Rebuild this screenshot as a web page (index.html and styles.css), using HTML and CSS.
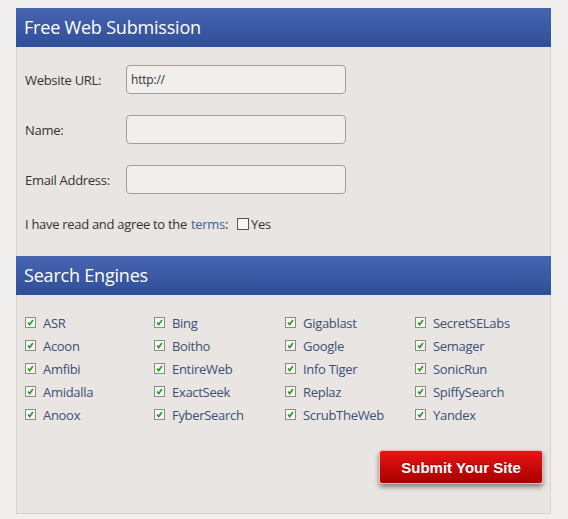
FILE: index.html
```html
<!DOCTYPE html>
<html>
<head>
<meta charset="utf-8">
<link rel="stylesheet" href="styles.css">
</head>
<body>
<div class="panel">
  <div class="head">Free Web Submission</div>
  <div class="form">
    <div class="row"><label class="lbl">Website URL:</label><div class="input">http://</div></div>
    <div class="row"><label class="lbl">Name:</label><div class="input"></div></div>
    <div class="row"><label class="lbl">Email Address:</label><div class="input"></div></div>
    <div class="terms">I have read and agree to the <span class="link">terms</span>: <span class="box"></span>Yes</div>
  </div>
  <div class="head">Search Engines</div>
  <div class="engines">
    <div class="eng"><span class="chk"><svg viewBox="0 0 11 11"><path d="M2.5 5.5 L4.5 8 L8.5 2.5" fill="none" stroke="#2f9a22" stroke-width="2"/></svg></span>ASR</div>
    <div class="eng"><span class="chk"><svg viewBox="0 0 11 11"><path d="M2.5 5.5 L4.5 8 L8.5 2.5" fill="none" stroke="#2f9a22" stroke-width="2"/></svg></span>Bing</div>
    <div class="eng"><span class="chk"><svg viewBox="0 0 11 11"><path d="M2.5 5.5 L4.5 8 L8.5 2.5" fill="none" stroke="#2f9a22" stroke-width="2"/></svg></span>Gigablast</div>
    <div class="eng"><span class="chk"><svg viewBox="0 0 11 11"><path d="M2.5 5.5 L4.5 8 L8.5 2.5" fill="none" stroke="#2f9a22" stroke-width="2"/></svg></span>SecretSELabs</div>
    <div class="eng"><span class="chk"><svg viewBox="0 0 11 11"><path d="M2.5 5.5 L4.5 8 L8.5 2.5" fill="none" stroke="#2f9a22" stroke-width="2"/></svg></span>Acoon</div>
    <div class="eng"><span class="chk"><svg viewBox="0 0 11 11"><path d="M2.5 5.5 L4.5 8 L8.5 2.5" fill="none" stroke="#2f9a22" stroke-width="2"/></svg></span>Boitho</div>
    <div class="eng"><span class="chk"><svg viewBox="0 0 11 11"><path d="M2.5 5.5 L4.5 8 L8.5 2.5" fill="none" stroke="#2f9a22" stroke-width="2"/></svg></span>Google</div>
    <div class="eng"><span class="chk"><svg viewBox="0 0 11 11"><path d="M2.5 5.5 L4.5 8 L8.5 2.5" fill="none" stroke="#2f9a22" stroke-width="2"/></svg></span>Semager</div>
    <div class="eng"><span class="chk"><svg viewBox="0 0 11 11"><path d="M2.5 5.5 L4.5 8 L8.5 2.5" fill="none" stroke="#2f9a22" stroke-width="2"/></svg></span>Amfibi</div>
    <div class="eng"><span class="chk"><svg viewBox="0 0 11 11"><path d="M2.5 5.5 L4.5 8 L8.5 2.5" fill="none" stroke="#2f9a22" stroke-width="2"/></svg></span>EntireWeb</div>
    <div class="eng"><span class="chk"><svg viewBox="0 0 11 11"><path d="M2.5 5.5 L4.5 8 L8.5 2.5" fill="none" stroke="#2f9a22" stroke-width="2"/></svg></span>Info Tiger</div>
    <div class="eng"><span class="chk"><svg viewBox="0 0 11 11"><path d="M2.5 5.5 L4.5 8 L8.5 2.5" fill="none" stroke="#2f9a22" stroke-width="2"/></svg></span>SonicRun</div>
    <div class="eng"><span class="chk"><svg viewBox="0 0 11 11"><path d="M2.5 5.5 L4.5 8 L8.5 2.5" fill="none" stroke="#2f9a22" stroke-width="2"/></svg></span>Amidalla</div>
    <div class="eng"><span class="chk"><svg viewBox="0 0 11 11"><path d="M2.5 5.5 L4.5 8 L8.5 2.5" fill="none" stroke="#2f9a22" stroke-width="2"/></svg></span>ExactSeek</div>
    <div class="eng"><span class="chk"><svg viewBox="0 0 11 11"><path d="M2.5 5.5 L4.5 8 L8.5 2.5" fill="none" stroke="#2f9a22" stroke-width="2"/></svg></span>Replaz</div>
    <div class="eng"><span class="chk"><svg viewBox="0 0 11 11"><path d="M2.5 5.5 L4.5 8 L8.5 2.5" fill="none" stroke="#2f9a22" stroke-width="2"/></svg></span>SpiffySearch</div>
    <div class="eng"><span class="chk"><svg viewBox="0 0 11 11"><path d="M2.5 5.5 L4.5 8 L8.5 2.5" fill="none" stroke="#2f9a22" stroke-width="2"/></svg></span>Anoox</div>
    <div class="eng"><span class="chk"><svg viewBox="0 0 11 11"><path d="M2.5 5.5 L4.5 8 L8.5 2.5" fill="none" stroke="#2f9a22" stroke-width="2"/></svg></span>FyberSearch</div>
    <div class="eng"><span class="chk"><svg viewBox="0 0 11 11"><path d="M2.5 5.5 L4.5 8 L8.5 2.5" fill="none" stroke="#2f9a22" stroke-width="2"/></svg></span>ScrubTheWeb</div>
    <div class="eng"><span class="chk"><svg viewBox="0 0 11 11"><path d="M2.5 5.5 L4.5 8 L8.5 2.5" fill="none" stroke="#2f9a22" stroke-width="2"/></svg></span>Yandex</div>
  </div>
  <div class="actions"><button class="submit">Submit Your Site</button></div>
</div>
</body>
</html>
```
FILE: styles.css
```css
html, body { margin: 0; padding: 0; }
body {
  background: #f1efed;
  font-family: "Open Sans", "DejaVu Sans", sans-serif;
  width: 568px;
  height: 519px;
  overflow: hidden;
}
.panel {
  margin: 8px 0 0 16px;
  width: 535px;
  height: 506px;
  background: #e8e5e2;
  border: 1px solid #d6d2cd;
  border-top: none;
  box-sizing: border-box;
}
.head {
  height: 39px;
  line-height: 38px;
  background: linear-gradient(#4764b0, #2f4e98);
  color: #fff;
  font-size: 18px;
  letter-spacing: -0.2px;
  padding-left: 8px;
  margin: 0 -1px;
}
.form {
  padding: 18px 0 0 8px;
  height: 209px;
  box-sizing: border-box;
}
.row {
  display: flex;
  align-items: center;
  height: 29px;
  margin-bottom: 21px;
}
.lbl {
  width: 101px;
  font-size: 13px;
  letter-spacing: -0.3px;
  color: #333;
}
.input {
  width: 214px;
  height: 27px;
  border: 1px solid #a99c90;
  border-radius: 4px;
  background: #f1efed;
  font-size: 12px;
  letter-spacing: -0.2px;
  line-height: 27px;
  padding-left: 4px;
  color: #333;
  box-sizing: content-box;
}
.terms {
  margin-top: 3px;
  font-size: 13px;
  letter-spacing: -0.3px;
  color: #333;
  display: flex;
  align-items: center;
}
.link { color: #3c5f94; margin-left: 4px; }
.box {
  width: 10px;
  height: 10px;
  border: 1px solid #555;
  background: #f4f4f4;
  margin: 0 2px 0 9px;
}
.engines {
  display: grid;
  grid-template-columns: 129px 131px 130px 130px;
  grid-auto-rows: 23px;
  padding: 16px 0 0 8px;
}
.eng {
  display: flex;
  align-items: center;
  font-size: 13px;
  letter-spacing: -0.3px;
  color: #3d4f77;
}
.chk {
  width: 11px;
  height: 11px;
  border: 1px solid #8a8a8a;
  background: #f6f6f6;
  margin-right: 7px;
  display: inline-flex;
  box-sizing: border-box;
}
.chk svg { width: 9px; height: 9px; }
.actions {
  display: flex;
  justify-content: flex-end;
  padding: 24px 7px 0 0;
}
.submit {
  width: 164px;
  height: 34px;
  border: 1px solid #f3b4b4;
  border-radius: 3px;
  background: linear-gradient(#ea1313, #a80000);
  color: #fff;
  font-family: "Liberation Sans", Arial, sans-serif;
  font-weight: bold;
  font-size: 15px;
  box-shadow: 0 3px 5px rgba(0,0,0,0.45);
  text-shadow: 0 -1px 0 rgba(0,0,0,0.3);
  padding: 0;
}
```
